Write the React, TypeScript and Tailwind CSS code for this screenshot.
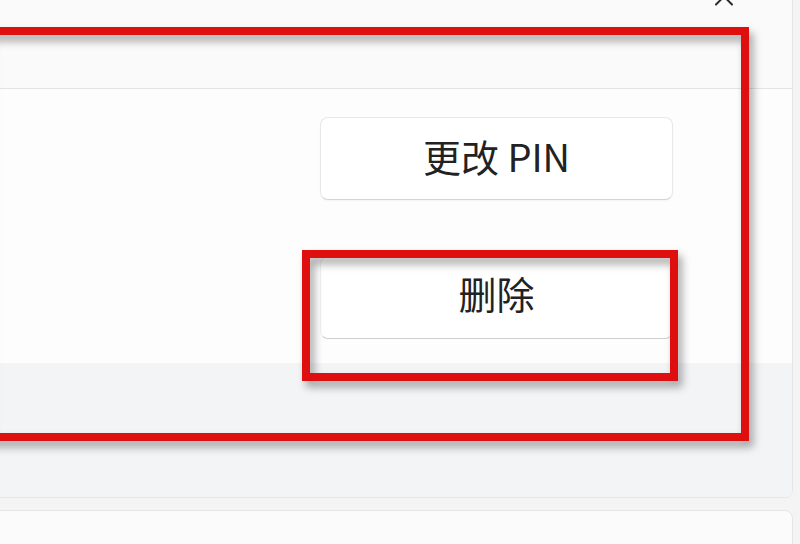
export default function App() {
  return (
    <div className="relative h-[544px] w-[800px] overflow-hidden bg-[#f4f4f4] font-['Noto_Sans_CJK_SC','Noto_Sans',sans-serif] text-[#1b1b1b]">
      <div className="-ml-[20px] -mt-[20px] flex w-[813px] flex-col gap-[12px]">
        {/* PIN card */}
        <div className="overflow-hidden rounded-[8px] border border-[#e6e6e6] bg-[#fbfbfb]">
          <div className="flex h-[108px] items-start justify-end border-b border-[#e3e3e3] bg-[#fafafa] pr-[58px]">
            <svg width="20" height="14" viewBox="0 0 20 14" className="mt-[12px]" fill="none">
              <path d="M2 11.5 L10 3.5 L18 11.5" stroke="#2b2b2b" strokeWidth="2" strokeLinecap="round" strokeLinejoin="round" />
            </svg>
          </div>
          <div className="flex flex-col items-end gap-[56px] bg-[#fdfdfd] pb-[24px] pr-[119px] pt-[28px]">
            <button className="flex h-[83px] w-[353px] items-center justify-center rounded-[8px] border border-[#e8e8e8] border-b-[#d4d4d4] bg-white pb-[5px] text-[38px] leading-none text-[#222] shadow-[0_1px_2px_rgba(0,0,0,0.04)]">
              更改 PIN
            </button>
            <button className="flex h-[83px] w-[353px] items-center justify-center rounded-[8px] border border-[#f0f0f0] border-b-[#cfcfcf] bg-white pb-[9px] text-[38px] leading-none text-[#222]">
              删除
            </button>
          </div>
          <div className="h-[134px] bg-[#f3f4f6]" />
        </div>
        {/* next card */}
        <div className="h-[80px] rounded-[8px] border border-[#e6e6e6] bg-[#fbfbfb]" />
      </div>

      {/* annotation boxes */}
      <div className="absolute -left-[20px] top-[27px] h-[414px] w-[769px] border-[8px] border-[#e00f0f] [filter:drop-shadow(4px_6px_4px_rgba(0,0,0,0.35))]" />
      <div className="absolute left-[302px] top-[250px] h-[131px] w-[376px] border-[8px] border-[#e00f0f] [filter:drop-shadow(4px_6px_4px_rgba(0,0,0,0.35))]" />
    </div>
  );
}
